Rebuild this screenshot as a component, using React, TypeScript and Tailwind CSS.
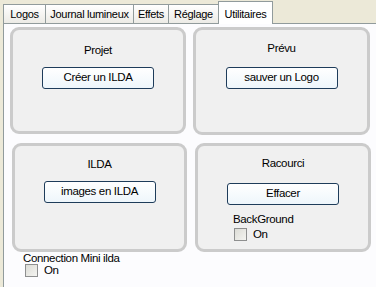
import React from "react";

const font = { fontFamily: '"Liberation Sans", Arial, sans-serif' };

function Tab({ label, w, selected }: { label: string; w: number; selected?: boolean }) {
  if (selected) {
    return (
      <div
        className="relative z-10 -mb-[1px] flex h-[23px] items-start justify-center border border-b-0 border-[#919b9c] bg-white pt-[4px] text-[11px] tracking-[-0.3px] text-black"
        style={{ width: w }}
      >
        {label}
      </div>
    );
  }
  return (
    <div
      className="-mr-[1px] flex h-[19px] items-center justify-center border border-b-0 border-[#919b9c] bg-gradient-to-b from-white to-[#ecebe6] text-[11px] tracking-[-0.3px] text-black"
      style={{ width: w }}
    >
      {label}
    </div>
  );
}

function Btn({ label }: { label: string }) {
  return (
    <div className="flex h-[22px] w-[112px] items-center justify-center rounded-[3px] border border-[#1e3c5a] bg-gradient-to-b from-white to-[#eef6fb] text-[11.5px] tracking-[-0.35px] text-black">
      {label}
    </div>
  );
}

function Check() {
  return (
    <div className="h-[13px] w-[13px] border border-[#8e8f8f] bg-gradient-to-br from-[#dcdcd6] to-[#f4f4f1]" />
  );
}

export default function App() {
  return (
    <div className="flex h-[287px] w-[376px] flex-col overflow-hidden bg-[#ece9d8] text-black" style={font}>
      <div className="flex h-[23px] items-end pl-[3px] pt-[1px]">
        <Tab label="Logos" w={43} />
        <Tab label="Journal lumineux" w={89} />
        <Tab label="Effets" w={36} />
        <Tab label="Réglage" w={51} />
        <Tab label="Utilitaires" w={55} selected />
      </div>
      <div className="ml-[3px] flex flex-1 flex-col border-l border-t border-[#919b9c] bg-[#fcfcfe]">
        <div className="flex gap-[7px] pl-[6px] pt-[3px]">
          <div className="flex h-[107px] w-[176px] flex-col items-center rounded-[9px] border-[3px] border-[#cbcbcb] bg-[#f0f0f0] pt-[13px]">
            <div className="text-[11.5px] leading-[14px] tracking-[-0.35px]">Projet</div>
            <div className="mt-[10px]">
              <Btn label="Créer un ILDA" />
            </div>
          </div>
          <div className="flex h-[108px] w-[177px] flex-col items-center rounded-[9px] border-[3px] border-[#cbcbcb] bg-[#f0f0f0] pt-[11px]">
            <div className="text-[11.5px] leading-[14px] tracking-[-0.35px]">Prévu</div>
            <div className="mt-[12px]">
              <Btn label="sauver un Logo" />
            </div>
          </div>
        </div>
        <div className="flex gap-[8px] pl-[8px] pt-[8px]">
          <div className="flex h-[109px] w-[175px] flex-col items-center rounded-[9px] border-[3px] border-[#cbcbcb] bg-[#f0f0f0] pt-[11px]">
            <div className="text-[11.5px] leading-[14px] tracking-[-0.35px]">ILDA</div>
            <div className="mt-[10px]">
              <Btn label="images en ILDA" />
            </div>
          </div>
          <div className="flex h-[109px] w-[176px] flex-col rounded-[9px] border-[3px] border-[#cbcbcb] bg-[#f0f0f0] pt-[10px]">
            <div className="text-center text-[11.5px] leading-[14px] tracking-[-0.35px]">Racourci</div>
            <div className="mt-[13px] flex justify-center">
              <Btn label="Effacer" />
            </div>
            <div className="ml-[35px] mt-[7px] text-[11.5px] leading-[14px] tracking-[-0.35px]">BackGround</div>
            <div className="ml-[36px] mt-[2px] flex h-[13px] items-center gap-[6px] text-[11.5px] leading-[13px] tracking-[-0.35px]">
              <Check />
              <span>On</span>
            </div>
          </div>
        </div>
        <div className="ml-[19px] mt-[0px] text-[11.5px] leading-[13px] tracking-[-0.35px]">Connection Mini ilda</div>
        <div className="ml-[21px] mt-[-1px] flex h-[13px] items-center gap-[6px] text-[11.5px] leading-[13px] tracking-[-0.35px]">
          <Check />
          <span>On</span>
        </div>
      </div>
    </div>
  );
}
